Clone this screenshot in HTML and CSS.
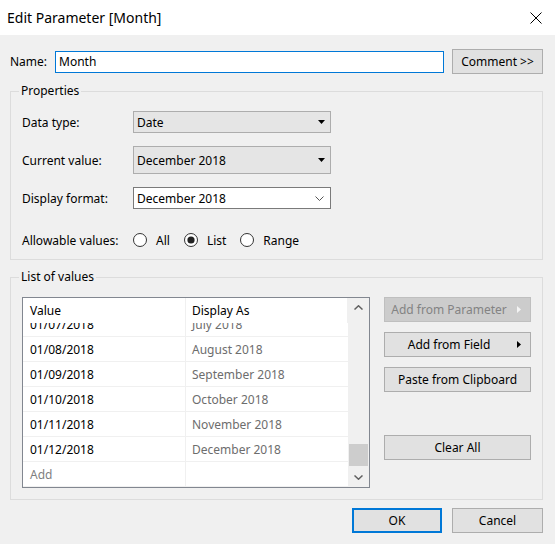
FILE: index.html
```html
<!DOCTYPE html>
<html>
<head>
<meta charset="utf-8">
<link rel="stylesheet" href="styles.css">
</head>
<body>
<div class="titlebar">
  <span class="title">Edit Parameter [Month]</span>
  <svg class="close" width="12" height="12" viewBox="0 0 12 12"><path d="M0.5 0.5 L11.5 11.5 M11.5 0.5 L0.5 11.5" stroke="#000" stroke-width="1" fill="none"/></svg>
</div>
<div class="content">
  <div class="name-row">
    <span class="name-label">Name:</span>
    <div class="name-input">Month</div>
    <div class="btn comment-btn">Comment &gt;&gt;</div>
  </div>

  <fieldset class="group props">
    <legend>Properties</legend>
    <div class="props-grid">
      <span class="plabel">Data type:</span>
      <div class="select sel-type"><span>Date</span><svg width="7" height="4" viewBox="0 0 7 4"><polygon points="0,0 7,0 3.5,4" fill="#000"/></svg></div>
      <span class="plabel">Current value:</span>
      <div class="select sel-cur"><span>December 2018</span><svg width="7" height="4" viewBox="0 0 7 4"><polygon points="0,0 7,0 3.5,4" fill="#000"/></svg></div>
      <span class="plabel">Display format:</span>
      <div class="select sel-fmt"><span>December 2018</span><svg width="9" height="5" viewBox="0 0 9 5"><path d="M0.5 0.5 L4.5 4.5 L8.5 0.5" stroke="#555" stroke-width="1" fill="none"/></svg></div>
      <span class="plabel allow-label">Allowable values:</span>
      <div class="radios">
        <span class="radio"><svg width="14" height="14" viewBox="0 0 14 14"><circle cx="7" cy="7" r="6.5" fill="#fff" stroke="#333"/></svg>All</span>
        <span class="radio"><svg width="14" height="14" viewBox="0 0 14 14"><circle cx="7" cy="7" r="6.5" fill="#fff" stroke="#333"/><circle cx="7" cy="7" r="3.6" fill="#222"/></svg>List</span>
        <span class="radio"><svg width="14" height="14" viewBox="0 0 14 14"><circle cx="7" cy="7" r="6.5" fill="#fff" stroke="#333"/></svg>Range</span>
      </div>
    </div>
  </fieldset>

  <fieldset class="group lov">
    <legend>List of values</legend>
    <div class="lov-inner">
      <div class="grid">
        <div class="gmain">
          <div class="ghead">
            <div class="c1">Value</div>
            <div class="c2">Display As</div>
          </div>
          <div class="gbody">
            <div class="rows">
              <div class="row"><div class="c1">01/07/2018</div><div class="c2">July 2018</div></div>
              <div class="row"><div class="c1">01/08/2018</div><div class="c2">August 2018</div></div>
              <div class="row"><div class="c1">01/09/2018</div><div class="c2">September 2018</div></div>
              <div class="row"><div class="c1">01/10/2018</div><div class="c2">October 2018</div></div>
              <div class="row"><div class="c1">01/11/2018</div><div class="c2">November 2018</div></div>
              <div class="row"><div class="c1">01/12/2018</div><div class="c2">December 2018</div></div>
              <div class="row add-row"><div class="c1">Add</div><div class="c2"></div></div>
            </div>
          </div>
        </div>
        <div class="vsb">
          <div class="sb-up"><svg width="9" height="5" viewBox="0 0 9 5"><path d="M0.5 4.5 L4.5 0.8 L8.5 4.5" stroke="#606060" stroke-width="1.5" fill="none"/></svg></div>
          <div class="sb-track"><div class="sb-thumb"></div></div>
          <div class="sb-down"><svg width="9" height="5" viewBox="0 0 9 5"><path d="M0.5 0.5 L4.5 4.2 L8.5 0.5" stroke="#606060" stroke-width="1.5" fill="none"/></svg></div>
        </div>
      </div>
      <div class="side-btns">
        <div class="btn side disabled"><span>Add from Parameter</span><svg class="arr" width="4" height="7" viewBox="0 0 4 7"><polygon points="0,0 4,3.5 0,7" fill="#f4f4f4"/></svg></div>
        <div class="btn side"><span>Add from Field</span><svg class="arr" width="4" height="7" viewBox="0 0 4 7"><polygon points="0,0 4,3.5 0,7" fill="#000"/></svg></div>
        <div class="btn side plain">Paste from Clipboard</div>
        <div class="btn side plain clear">Clear All</div>
      </div>
    </div>
  </fieldset>

  <div class="footer">
    <div class="btn ok">OK</div>
    <div class="btn cancel">Cancel</div>
  </div>
</div>
</body>
</html>
```
FILE: styles.css
```css
* { box-sizing: border-box; }

html, body {
  margin: 0;
  padding: 0;
}

body {
  width: 555px;
  height: 544px;
  overflow: hidden;
  background: #f0f0f0;
  font-family: "Noto Sans", "Liberation Sans", sans-serif;
  font-size: 12px;
  color: #000;
}

.titlebar {
  height: 35px;
  background: #fff;
  display: flex;
  align-items: center;
  justify-content: space-between;
  padding: 0 13px 0 7px;
}

.title {
  font-size: 14px;
  line-height: 20px;
}

.close {
  display: block;
}

.content {
  padding: 14px 12px 0 10px;
}

.name-row {
  display: flex;
  align-items: center;
  height: 25px;
}

.name-label {
  width: 45px;
}

.name-input {
  width: 389px;
  height: 22px;
  border: 1px solid #0078d7;
  background: #fff;
  padding: 0 3px;
  display: flex;
  align-items: center;
}

.btn {
  background: #e1e1e1;
  border: 1px solid #adadad;
  display: flex;
  align-items: center;
  justify-content: center;
  height: 25px;
}

.comment-btn {
  width: 91px;
  margin-left: 8px;
}

.group {
  margin: 9px 0 0;
  border: 1px solid #dcdcdc;
  min-width: 0;
}

.group legend {
  padding: 0 2px;
  margin-left: -3px;
  line-height: 16px;
}

.props {
  padding: 12px 0 8px 11px;
}

.props-grid {
  display: grid;
  grid-template-columns: 111px 198px;
  row-gap: 13px;
  align-items: center;
}

.select {
  display: flex;
  align-items: center;
  justify-content: space-between;
  border: 1px solid #adadad;
  background: #e5e5e5;
  padding: 0 5px 0 3px;
  height: 22px;
}

.sel-cur {
  height: 28px;
}

.sel-fmt {
  background: #fff;
  border-color: #7a7a7a;
  padding-right: 6px;
}

.select svg, .radio svg, .arr {
  display: block;
  flex: none;
}

.allow-label {
  margin-top: 7px;
}

.radios {
  margin-top: 7px;
  display: flex;
  align-items: center;
  gap: 14px;
  height: 22px;
}

.radio {
  display: flex;
  align-items: center;
  gap: 9px;
}

.lov {
  padding: 12px 0 11px 11px;
}

.lov-inner {
  display: flex;
  gap: 14px;
}

.grid {
  width: 348px;
  height: 191px;
  border: 1px solid #828790;
  background: #fff;
  display: flex;
}

.gmain {
  width: 325px;
  display: flex;
  flex-direction: column;
}

.ghead {
  height: 25px;
  display: flex;
  flex: none;
}

.ghead .c1, .row .c1 {
  width: 163px;
  border-right: 1px solid #f0f0f0;
}

.ghead .c2 {
  width: 162px;
  border-right: 1px solid #f0f0f0;
}

.c1, .c2 {
  display: flex;
  align-items: center;
  padding-left: 7px;
  white-space: nowrap;
  overflow: hidden;
}

.row .c2 {
  flex: 1;
  color: #6d6d6d;
  padding-left: 6px;
}

.ghead .c2 {
  padding-left: 6px;
}

.gbody {
  flex: 1;
  overflow: hidden;
}

.rows {
  margin-top: -11px;
}

.row {
  height: 25px;
  display: flex;
  border-bottom: 1px solid #f0f0f0;
}

.add-row .c1 {
  color: #7f7f7f;
}

.vsb {
  width: 21px;
  background: #f0f0f0;
  display: flex;
  flex-direction: column;
}

.sb-up, .sb-down {
  display: flex;
  align-items: center;
  justify-content: center;
  flex: none;
}

.sb-up { height: 18px; }
.sb-down { height: 20px; }

.sb-track {
  flex: 1;
  display: flex;
  flex-direction: column;
  justify-content: flex-end;
}

.sb-thumb {
  height: 22px;
  margin: 0 1px 1px;
  background: #cdcdcd;
}

.side-btns {
  width: 147px;
  display: flex;
  flex-direction: column;
  gap: 10px;
}

.side {
  position: relative;
  padding-right: 17px;
}

.side span {
  flex: 1;
  text-align: center;
}

.side.plain {
  padding-right: 0;
}

.side .arr {
  position: absolute;
  right: 9px;
  top: 8px;
}

.disabled {
  background: #cccccc;
  border-color: #bfbfbf;
  color: #838383;
}

.clear {
  margin-top: 33px;
}

.footer {
  display: flex;
  justify-content: flex-end;
  gap: 10px;
  margin-top: 8px;
}

.ok, .cancel {
  width: 90px;
}

.ok {
  border: 2px solid #0078d7;
}

.cancel {
  width: 91px;
}
```
